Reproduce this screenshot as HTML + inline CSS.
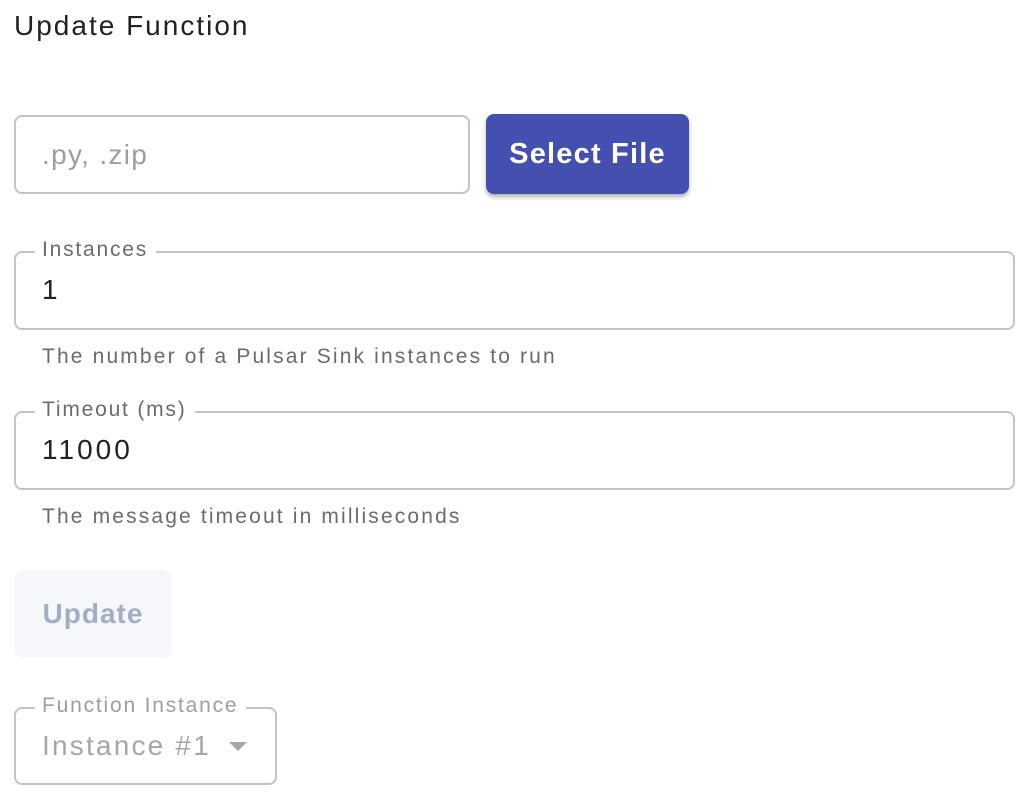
<!DOCTYPE html>
<html><head><meta charset="utf-8">
<style>
*{box-sizing:border-box;margin:0;padding:0}
body{width:1024px;height:802px;background:#fff;font-family:"Liberation Sans",sans-serif;position:relative;overflow:hidden}
.a{position:absolute;white-space:nowrap}
.box{position:absolute;border:2px solid #c4c4c4;border-radius:8px}
.lbl{position:absolute;background:#fff;padding:0 8px 0 7px;font-size:21px;color:#6b6b6b;line-height:24px;letter-spacing:1.8px}
</style></head><body>
<div class="a" style="left:14px;top:9px;font-size:28px;color:#222;line-height:34px;letter-spacing:2px">Update Function</div>

<div class="box" style="left:14px;top:115px;width:456px;height:79px"></div>
<div class="a" style="left:42px;top:138px;font-size:28px;color:#9e9e9e;line-height:34px;letter-spacing:1.3px">.py, .zip</div>

<div class="a" style="left:486px;top:114px;width:203px;height:80px;background:#4350af;border-radius:8px;box-shadow:0 3px 4px rgba(0,0,0,.3);color:#fff;font-size:29px;font-weight:bold;text-align:center;line-height:80px;letter-spacing:1.2px">Select File</div>

<div class="box" style="left:14px;top:251px;width:1001px;height:79px"></div>
<div class="lbl" style="left:35px;top:238px">Instances</div>
<div class="a" style="left:42px;top:273px;font-size:28px;color:#222;line-height:34px">1</div>
<div class="a" style="left:42px;top:344px;font-size:21px;color:#6b6b6b;line-height:26px;letter-spacing:2.15px">The number of a Pulsar Sink instances to run</div>

<div class="box" style="left:14px;top:411px;width:1001px;height:79px"></div>
<div class="lbl" style="left:35px;top:398px">Timeout (ms)</div>
<div class="a" style="left:42px;top:433px;font-size:28px;color:#222;line-height:34px;letter-spacing:3px">11000</div>
<div class="a" style="left:42px;top:504px;font-size:21px;color:#6b6b6b;line-height:26px;letter-spacing:2.15px">The message timeout in milliseconds</div>

<div class="a" style="left:14px;top:570px;width:158px;height:88px;background:#f5f7fa;border-radius:10px;color:#a3aec2;font-size:28px;font-weight:bold;text-align:center;line-height:88px;letter-spacing:1px">Update</div>

<div class="box" style="left:14px;top:707px;width:263px;height:78px"></div>
<div class="lbl" style="left:35px;top:694px;color:#9e9e9e">Function Instance</div>
<div class="a" style="left:42px;top:729px;font-size:28px;color:#a6a6a6;line-height:34px;letter-spacing:2.2px">Instance #1</div>
<div class="a" style="left:229px;top:742px;width:0;height:0;border-left:9px solid transparent;border-right:9px solid transparent;border-top:9px solid #a6a6a6"></div>
</body></html>
